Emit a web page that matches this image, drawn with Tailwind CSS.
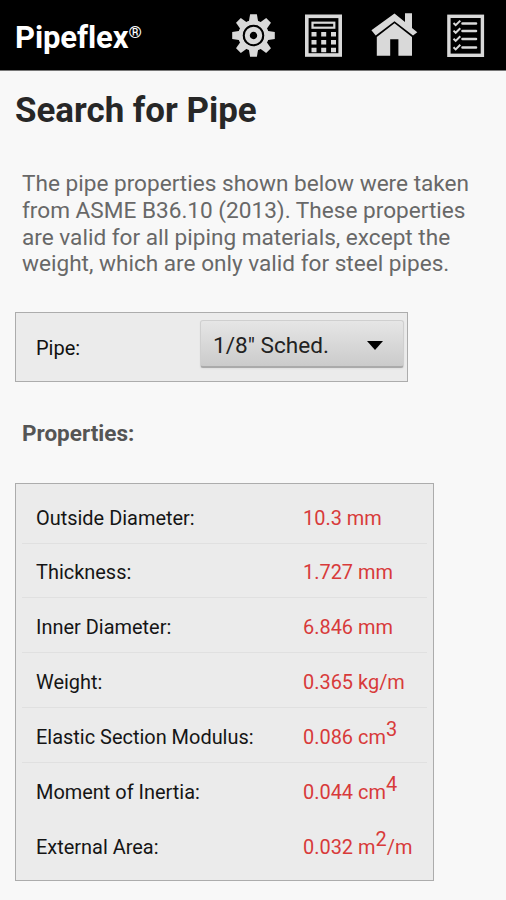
<!DOCTYPE html>
<html lang="en">
<head>
    <meta charset="UTF-8">
    <title>Pipeflex</title>
    <script src="https://cdn.jsdelivr.net/npm/@tailwindcss/browser@4"></script>
</head>
<body class="bg-[#f8f8f8] font-['Roboto',sans-serif]">
    <div class="w-[506px] h-[900px] overflow-hidden">
        <header class="flex h-[71px] border-b border-[#777] bg-black pl-[15px]">
            <div class="w-[217px] pt-5 text-[31px] leading-9 font-bold tracking-[-0.1px] text-white whitespace-nowrap">Pipeflex<span class="inline-block align-[10px] text-[17px] leading-none font-medium">®</span></div>
            <nav class="flex pt-[13px] text-[#d9d9d9]">
                <!-- Settings -->
                <a href="#" class="w-[72px]">
                    <svg class="w-[43px] h-[44px]" viewBox="0 0 43 44" fill="currentColor">
                        <g transform="translate(21.5 22.5)">
                            <path id="tooth" d="M-4.8 -13 L-3.4 -21.3 H3.4 L4.8 -13Z"/>
                            <use href="#tooth" transform="rotate(45)"/>
                            <use href="#tooth" transform="rotate(90)"/>
                            <use href="#tooth" transform="rotate(135)"/>
                            <use href="#tooth" transform="rotate(180)"/>
                            <use href="#tooth" transform="rotate(225)"/>
                            <use href="#tooth" transform="rotate(270)"/>
                            <use href="#tooth" transform="rotate(315)"/>
                            <circle r="13" fill="none" stroke="currentColor" stroke-width="4.6"/>
                            <circle r="10.6" fill="#000"/>
                            <circle r="6.2" fill="none" stroke="currentColor" stroke-width="5"/>
                        </g>
                    </svg>
                </a>
                <!-- Calculator -->
                <a href="#" class="w-[67px]">
                    <svg class="w-[40px] h-[45px]" viewBox="0 0 40 45" fill="currentColor">
                        <rect x="2.8" y="3.3" width="33.4" height="38.7" fill="none" stroke="currentColor" stroke-width="3.6"/>
                        <rect x="8.5" y="9.7" width="21.8" height="5" fill="none" stroke="currentColor" stroke-width="2.2"/>
                        <path d="M7.5 19h5v4.5h-5zM17.2 19h5v4.5h-5zM27 19h5v4.5h-5zM7.5 27h5v4.5h-5zM17.2 27h5v4.5h-5zM27 27h5v4.5h-5zM7.5 34.8h5v4.5h-5zM17.2 34.8h5v4.5h-5zM27 34.8h5v4.5h-5z"/>
                    </svg>
                </a>
                <!-- Home -->
                <a href="#" class="w-[75px]">
                    <svg class="w-[47px] h-[44px]" viewBox="0 0 47 44" fill="currentColor">
                        <path d="M23.5 0.5 L34 9 V0.2 H41 V15 L46.3 19.2 L42 22.6 L23.5 8.2 L4.7 22.6 L0.4 17.2Z"/>
                        <path d="M23.5 10.3 L41 24 V42.7 H27.4 V26.3 H19.2 V42.7 H5.8 V24Z"/>
                    </svg>
                </a>
                <!-- Checklist -->
                <a href="#">
                    <svg class="w-[40px] h-[45px]" viewBox="0 0 40 45" fill="none" stroke="currentColor">
                        <rect x="2.9" y="3.3" width="33.5" height="39" stroke-width="3.4"/>
                        <path stroke-width="2.6" stroke-linecap="round" d="M16.5 10.5H30M16.5 18H30M16.5 26H30M16.5 34.5H30"/>
                        <path stroke-width="2" d="M7.5 10l2.2 2.2 4.6-4.6M7.5 17.6l2.2 2.2 4.6-4.6M7.5 25.7l2.2 2.2 4.6-4.6M7.5 34.2l2.2 2.2 4.6-4.6"/>
                    </svg>
                </a>
            </nav>
        </header>

        <main class="pl-[15px]">
            <h1 class="pt-5 text-[34.9px] leading-10 font-bold text-[#272727] whitespace-nowrap">Search for Pipe</h1>

            <div class="mt-10 ml-[7px] text-[22.6px] leading-[26.8px] text-[#686868] whitespace-nowrap">
                <p>The pipe properties shown below were taken</p>
                <p>from ASME B36.10 (2013). These properties</p>
                <p>are valid for all piping materials, except the</p>
                <p>weight, which are only valid for steel pipes.</p>
            </div>

            <div class="mt-[33.6px] flex h-[70px] w-[393px] items-start justify-between border border-[#acacac] bg-[#ebebeb] pt-[7px] pr-[3px] pl-5">
                <label class="pt-[16px] text-[20px] leading-6 text-[#111]">Pipe:</label>
                <button class="flex h-[48px] w-[204px] items-center justify-between rounded-[3px] border border-[#cfcfcf] border-b-2 border-b-[#aaa] bg-linear-to-b from-[#e6e6e6] to-[#cbcbcb] pt-[5px] pl-[12px] pr-[20px] text-[22.6px] text-[#222] shadow-xs">
                    <span>1/8" Sched.</span>
                    <svg class="w-4 h-[9px]" viewBox="0 0 16 9"><path d="M0 0H16L8 9Z" fill="#000"/></svg>
                </button>
            </div>

            <h2 class="mt-[37px] ml-[7px] text-[22.5px] leading-7 font-bold text-[#555]">Properties:</h2>

            <dl class="mt-[36px] h-[398px] w-[419px] border border-[#acacac] bg-[#ebebeb] px-[6px] pt-[5px] text-[19.95px] leading-6 text-[#151515] whitespace-nowrap">
                <div class="flex h-[54.8px] items-center border-b border-[#e0e0e0] pt-[4px] pl-[14px]">
                    <dt class="w-[267px]">Outside Diameter:</dt>
                    <dd class="text-[#d83a3a]">10.3 mm</dd>
                </div>
                <div class="flex h-[54.8px] items-center border-b border-[#e0e0e0] pt-[4px] pl-[14px]">
                    <dt class="w-[267px]">Thickness:</dt>
                    <dd class="text-[#d83a3a]">1.727 mm</dd>
                </div>
                <div class="flex h-[54.8px] items-center border-b border-[#e0e0e0] pt-[4px] pl-[14px]">
                    <dt class="w-[267px]">Inner Diameter:</dt>
                    <dd class="text-[#d83a3a]">6.846 mm</dd>
                </div>
                <div class="flex h-[54.8px] items-center border-b border-[#e0e0e0] pt-[4px] pl-[14px]">
                    <dt class="w-[267px]">Weight:</dt>
                    <dd class="text-[#d83a3a]">0.365 kg/m</dd>
                </div>
                <div class="flex h-[54.8px] items-center border-b border-[#e0e0e0] pt-[4.6px] pl-[14px]">
                    <dt class="w-[267px]">Elastic Section Modulus:</dt>
                    <dd class="text-[#d83a3a]">0.086 cm<sup class="-top-2 text-[19.95px]">3</sup></dd>
                </div>
                <div class="flex h-[54.8px] items-center pt-[4px] pl-[14px]">
                    <dt class="w-[267px]">Moment of Inertia:</dt>
                    <dd class="text-[#d83a3a]">0.044 cm<sup class="-top-2 text-[19.95px]">4</sup></dd>
                </div>
                <div class="flex h-[54.8px] items-center pt-[5px] pl-[14px]">
                    <dt class="w-[267px]">External Area:</dt>
                    <dd class="text-[#d83a3a]">0.032 m<sup class="-top-2 text-[19.95px]">2</sup>/m</dd>
                </div>
            </dl>
        </main>
    </div>
</body>
</html>
